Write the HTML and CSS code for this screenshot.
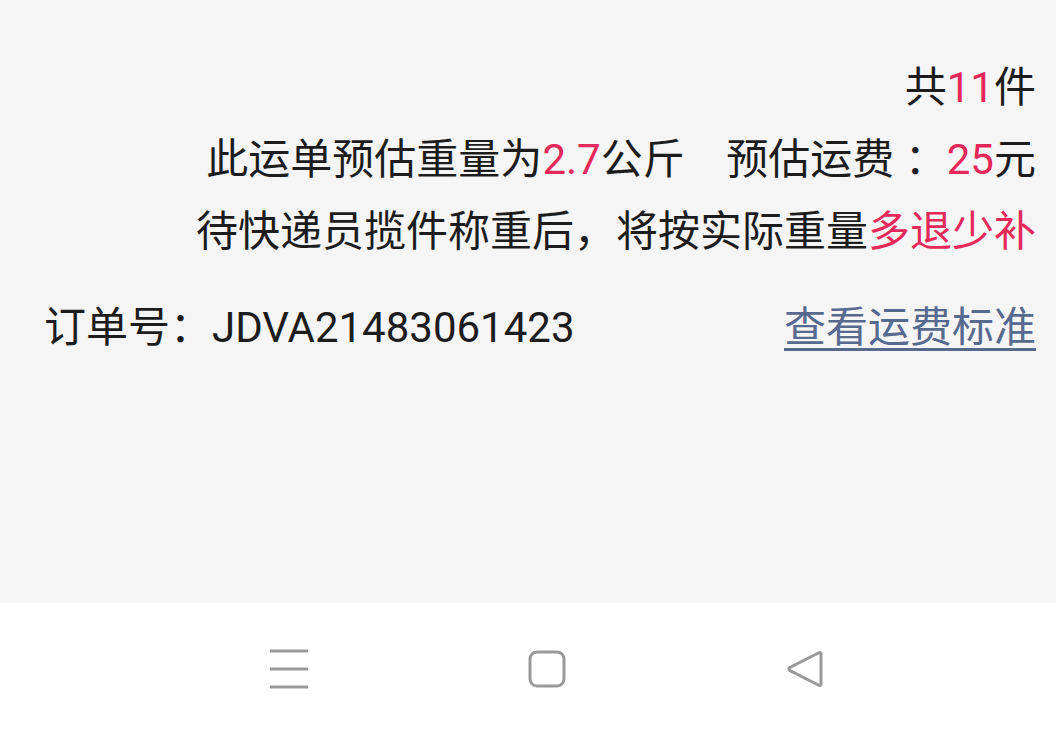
FILE: index.html
```html
<!DOCTYPE html>
<html lang="zh">
<head>
    <meta charset="UTF-8">
    <meta name="viewport" content="width=device-width, initial-scale=1.0">
    <title>订单详情</title>
    <link rel="stylesheet" href="styles.css">
</head>
<body>
    <div class="page">
        <div class="summary">
            <p class="line">共<span class="hl">11</span>件</p>
            <p class="line">此运单预估重量为<span class="hl">2.7</span>公斤    预估运费 ：<span class="hl">25</span>元</p>
            <p class="line">待快递员揽件称重后，将按实际重量<span class="hl">多退少补</span></p>
        </div>
        <div class="order-row">
            <span class="order-no">订单号：JDVA21483061423</span>
            <a class="fee-link" href="#">查看运费标准</a>
        </div>
    </div>
    <div class="nav-bar">
        <div class="nav-btn">
            <svg width="40" height="40" viewBox="0 0 40 40">
                <path d="M1 2H39M1 20H39M1 38H39" stroke="#999" stroke-width="3.2" fill="none"/>
            </svg>
        </div>
        <div class="nav-btn">
            <svg width="40" height="40" viewBox="0 0 40 40">
                <rect x="3" y="3" width="34" height="34" rx="7" stroke="#999" stroke-width="3" fill="none"/>
            </svg>
        </div>
        <div class="nav-btn">
            <svg width="40" height="40" viewBox="0 0 40 40">
                <path d="M36 5.5Q36 2.5 33.4 4L5 18.3Q2.8 20 5 21.7L33.4 36Q36 37.5 36 34.5Z" stroke="#999" stroke-width="3" stroke-linejoin="round" fill="none"/>
            </svg>
        </div>
    </div>
</body>
</html>
```

FILE: styles.css
```css
html, body {
    margin: 0;
    padding: 0;
}
body {
    width: 1056px;
    height: 734px;
    overflow: hidden;
    display: flex;
    flex-direction: column;
    font-family: Roboto, "Noto Sans CJK SC", sans-serif;
    color: #1c1c1c;
}
.page {
    flex: 1;
    background-color: #f5f5f5;
    padding: 52px 20px 0 44px;
}
.summary {
    text-align: right;
}
.line {
    margin: 0;
    font-size: 42px;
    line-height: 72px;
    white-space: pre;
}
.hl {
    color: #e5285a;
}
.order-row {
    display: flex;
    justify-content: space-between;
    align-items: center;
    margin-top: 24px;
    font-size: 42px;
    line-height: 72px;
}
.fee-link {
    color: #56698f;
    text-decoration: underline;
    text-underline-offset: 6px;
    text-decoration-thickness: 3px;
}
.nav-bar {
    height: 131px;
    background-color: #ffffff;
    display: flex;
    align-items: center;
    padding-left: 160px;
}
.nav-btn {
    width: 258px;
    display: flex;
    justify-content: center;
    align-items: center;
}
```
